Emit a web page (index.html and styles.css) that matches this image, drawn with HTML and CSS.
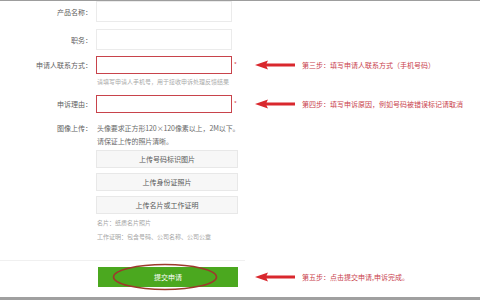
FILE: index.html
```html
<!DOCTYPE html>
<html lang="zh">
<head>
<meta charset="utf-8">
<link rel="stylesheet" href="styles.css">
</head>
<body>
<div class="page">
  <div class="row r1">
    <div class="label">产品名称：</div>
    <div class="input"></div>
  </div>
  <div class="row r2">
    <div class="label">职务：</div>
    <div class="input"></div>
  </div>
  <div class="row r3">
    <div class="label">申请人联系方式：</div>
    <div class="input red"></div>
    <div class="star">*</div>
    <div class="note">
      <svg class="arrow" viewBox="0 0 40 10" width="40" height="10"><path d="M0 5 L13 0.5 L11.5 3.6 L40 3.6 L40 6.4 L11.5 6.4 L13 9.5 Z" fill="#d9272d"/></svg>
      <span>第三步：填写申请人联系方式（手机号码）</span>
    </div>
  </div>
  <div class="hint">请填写申请人手机号，用于接收申诉处理反馈结果</div>
  <div class="row r4">
    <div class="label">申诉理由：</div>
    <div class="input red"></div>
    <div class="star">*</div>
    <div class="note">
      <svg class="arrow" viewBox="0 0 40 10" width="40" height="10"><path d="M0 5 L13 0.5 L11.5 3.6 L40 3.6 L40 6.4 L11.5 6.4 L13 9.5 Z" fill="#d9272d"/></svg>
      <span>第四步：填写申诉原因，例如号码被错误标记请取消</span>
    </div>
  </div>
  <div class="upload">
    <div class="label">图像上传：</div>
    <div class="desc">头像要求正方形120×120像素以上，2M以下。<br>请保证上传的照片清晰。</div>
  </div>
  <div class="buttons">
    <div class="btn">上传号码标识图片</div>
    <div class="btn">上传身份证照片</div>
    <div class="btn">上传名片或工作证明</div>
  </div>
  <div class="tips">
    <div>名片：纸质名片照片</div>
    <div>工作证明：包含号码、公司名称、公司公章</div>
  </div>
  <div class="sep"></div>
  <div class="row r5">
    <div class="submit-wrap">
      <div class="submit">提交申请</div>
      <svg class="ring" viewBox="0 0 106 28" width="106" height="28"><ellipse cx="53" cy="14" rx="51.5" ry="12.5" fill="none" stroke="#9c3a2c" stroke-width="1.6"/></svg>
    </div>
    <div class="note">
      <svg class="arrow" viewBox="0 0 40 10" width="40" height="10"><path d="M0 5 L13 0.5 L11.5 3.6 L40 3.6 L40 6.4 L11.5 6.4 L13 9.5 Z" fill="#d9272d"/></svg>
      <span>第五步：点击提交申请,申诉完成。</span>
    </div>
  </div>
  <div class="bottom"></div>
</div>
</body>
</html>
```

FILE: styles.css
```css
html, body {
  margin: 0;
  padding: 0;
  background: #fff;
}
body {
  width: 480px;
  height: 300px;
  overflow: hidden;
  font-family: "Noto Sans CJK SC", "Noto Sans", sans-serif;
  font-size: 7px;
  color: #666;
}
.page {
  border-top: 1px solid #9d9d9d;
}
.row {
  display: grid;
  grid-template-columns: 96px 136px 23px 1fr;
  align-items: center;
}
.label {
  text-align: right;
  padding-right: 4px;
  line-height: 10px;
  color: #606060;
}
.input {
  box-sizing: border-box;
  height: 21px;
  border: 1px solid #ebebeb;
  background: #fff;
}
.input.red {
  height: 18px;
  border: 1.5px solid #c8434b;
}
.star {
  color: #d44;
  font-size: 6px;
  padding-left: 2px;
  line-height: 8px;
}
.note {
  display: flex;
  align-items: center;
  gap: 7px;
  color: #c9424c;
  white-space: nowrap;
  line-height: 10px;
}
.arrow {
  display: block;
  flex: none;
}
.r1 { margin-top: 0; }
.r2 { margin-top: 7px; }
.r3 { margin-top: 6px; }
.hint {
  margin-top: 4px;
  margin-left: 97px;
  font-size: 6px;
  line-height: 8px;
  color: #aaa;
  white-space: nowrap;
}
.r4 { margin-top: 9px; }
.upload {
  display: grid;
  grid-template-columns: 96px 1fr;
  margin-top: 9px;
  line-height: 13px;
}
.upload .label { line-height: 13px; }
.desc {
  padding-left: 1px;
  color: #6a6a6a;
  white-space: nowrap;
  letter-spacing: -0.1px;
}
.buttons {
  margin-left: 96px;
  width: 142px;
  margin-top: 2px;
  display: flex;
  flex-direction: column;
  gap: 5px;
}
.btn {
  box-sizing: border-box;
  height: 18px;
  border: 1px solid #e8e8e8;
  background: #f7f7f7;
  text-align: center;
  line-height: 16px;
  color: #585858;
}
.tips {
  margin-top: 2px;
  margin-left: 97px;
  font-size: 6px;
  line-height: 14px;
  color: #a5a5a5;
}
.sep {
  margin-top: 16px;
  width: 245px;
  height: 1px;
  background: #f0f0f0;
}
.r5 {
  margin-top: 6px;
  grid-template-columns: 98px 140px 17px 1fr;
}
.submit-wrap {
  grid-column: 2;
  position: relative;
}
.r5 .note { grid-column: 4; }
.submit {
  height: 20px;
  background: #4ba81f;
  color: #fff;
  text-align: center;
  line-height: 20px;
}
.ring {
  position: absolute;
  left: 14px;
  top: -4px;
}
.bottom {
  margin-top: 10px;
  height: 3px;
  background: #a0a0a0;
}
```
